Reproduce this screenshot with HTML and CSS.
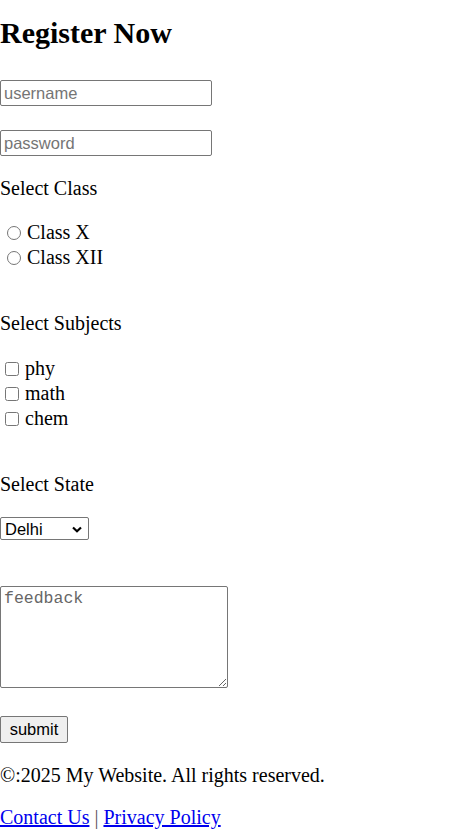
FILE: index.html
```html
<!DOCTYPE html>
<html lang="en">
<head>
<meta charset="utf-8">
<title>Register Now</title>
<link rel="stylesheet" href="styles.css">
</head>
<body>
<main class="page">
  <h2 class="title">Register Now</h2>
  <form class="form">
    <input class="field field-first" type="text" placeholder="username">
    <input class="field field-second" type="password" placeholder="password">
    <div class="label label-class">Select Class</div>
    <div class="group group-class">
      <label class="row row-radio"><input class="radio" type="radio" name="cls"> Class X</label>
      <label class="row row-radio"><input class="radio" type="radio" name="cls"> Class XII</label>
    </div>
    <div class="label label-subjects">Select Subjects</div>
    <div class="group group-subjects">
      <label class="row row-check"><input class="check" type="checkbox"> phy</label>
      <label class="row row-check"><input class="check" type="checkbox"> math</label>
      <label class="row row-check"><input class="check" type="checkbox"> chem</label>
    </div>
    <div class="label label-state">Select State</div>
    <select class="state">
      <option>Delhi</option>
      <option>Mumbai</option>
      <option>Punjab</option>
    </select>
    <textarea class="feedback" placeholder="feedback"></textarea>
    <button class="submit" type="button">submit</button>
  </form>
  <footer class="footer">
    <p class="copy">©:2025 My Website. All rights reserved.</p>
    <p class="links"><a href="#" class="link">Contact Us</a> <span class="sep">|</span> <a href="#" class="link">Privacy Policy</a></p>
  </footer>
</main>
</body>
</html>
```
FILE: styles.css
```css
html, body {
  margin: 0;
  padding: 0;
  background: #ffffff;
}

body {
  font-family: "Liberation Serif", "Times New Roman", serif;
  font-size: 20px;
  line-height: 25px;
  color: #000000;
}

.page {
  display: flex;
  flex-direction: column;
  align-items: flex-start;
}

.title {
  margin: 16px 0 0;
  font-size: 30px;
  line-height: 34px;
  font-weight: bold;
}

.form {
  display: flex;
  flex-direction: column;
  align-items: flex-start;
}

.field {
  box-sizing: border-box;
  width: 212px;
  height: 26px;
  margin: 0;
  padding: 1px 3px;
  border: 1px solid #767676;
  border-radius: 2px;
  font-family: "Liberation Sans", Arial, sans-serif;
  font-size: 16.5px;
  color: #000;
  background: #fff;
}

.field::placeholder {
  color: #757575;
}

.field-first {
  margin-top: 30px;
}

.field-second {
  margin-top: 24px;
}

.label {
  line-height: 25px;
}

.label-class {
  margin-top: 20px;
}

.label-subjects {
  margin-top: 41px;
}

.label-state {
  margin-top: 41px;
}

.group {
  display: flex;
  flex-direction: column;
  margin-top: 19px;
}

.group-subjects {
  margin-top: 20px;
}

.row {
  display: flex;
  align-items: center;
  height: 25px;
  line-height: 25px;
}

.radio {
  width: 14px;
  height: 14px;
  margin: 0 6px 0 7px;
}

.check {
  width: 14px;
  height: 14px;
  margin: 0 6px 0 5px;
}

.state {
  box-sizing: border-box;
  -webkit-appearance: none;
  appearance: none;
  margin-top: 20px;
  width: 89px;
  height: 23px;
  padding: 0 0 0 4px;
  border: 1px solid #767676;
  border-radius: 2px;
  font-family: "Liberation Sans", Arial, sans-serif;
  font-size: 16.5px;
  color: #000;
  background-color: #fff;
  background-image: url("data:image/svg+xml,%3Csvg xmlns='http://www.w3.org/2000/svg' width='10' height='7' viewBox='0 0 10 7'%3E%3Cpath d='M1 1.5 L5 5.2 L9 1.5' fill='none' stroke='%23000' stroke-width='2.2'/%3E%3C/svg%3E");
  background-repeat: no-repeat;
  background-position: 71px 8px;
  background-size: 10px 7px;
}

.feedback {
  box-sizing: border-box;
  margin: 46px 0 0;
  width: 228px;
  height: 102px;
  padding: 2px 3px;
  border: 1px solid #767676;
  border-radius: 2px;
  font-family: "Liberation Mono", "Courier New", monospace;
  font-size: 16.5px;
  line-height: 19px;
  color: #000;
}

.feedback::placeholder {
  color: #666666;
}

.submit {
  box-sizing: border-box;
  margin-top: 28px;
  width: 68px;
  height: 27px;
  padding: 0;
  border: 1px solid #767676;
  border-radius: 2px;
  background: #efefef;
  font-family: "Liberation Sans", Arial, sans-serif;
  font-size: 16.5px;
  color: #000;
}

.footer {
  display: flex;
  flex-direction: column;
}

.copy {
  margin: 20px 0 0;
}

.links {
  margin: 17px 0 0;
}

.link {
  color: #0000ee;
  text-decoration: underline;
}

.sep {
  color: #555555;
}
```
